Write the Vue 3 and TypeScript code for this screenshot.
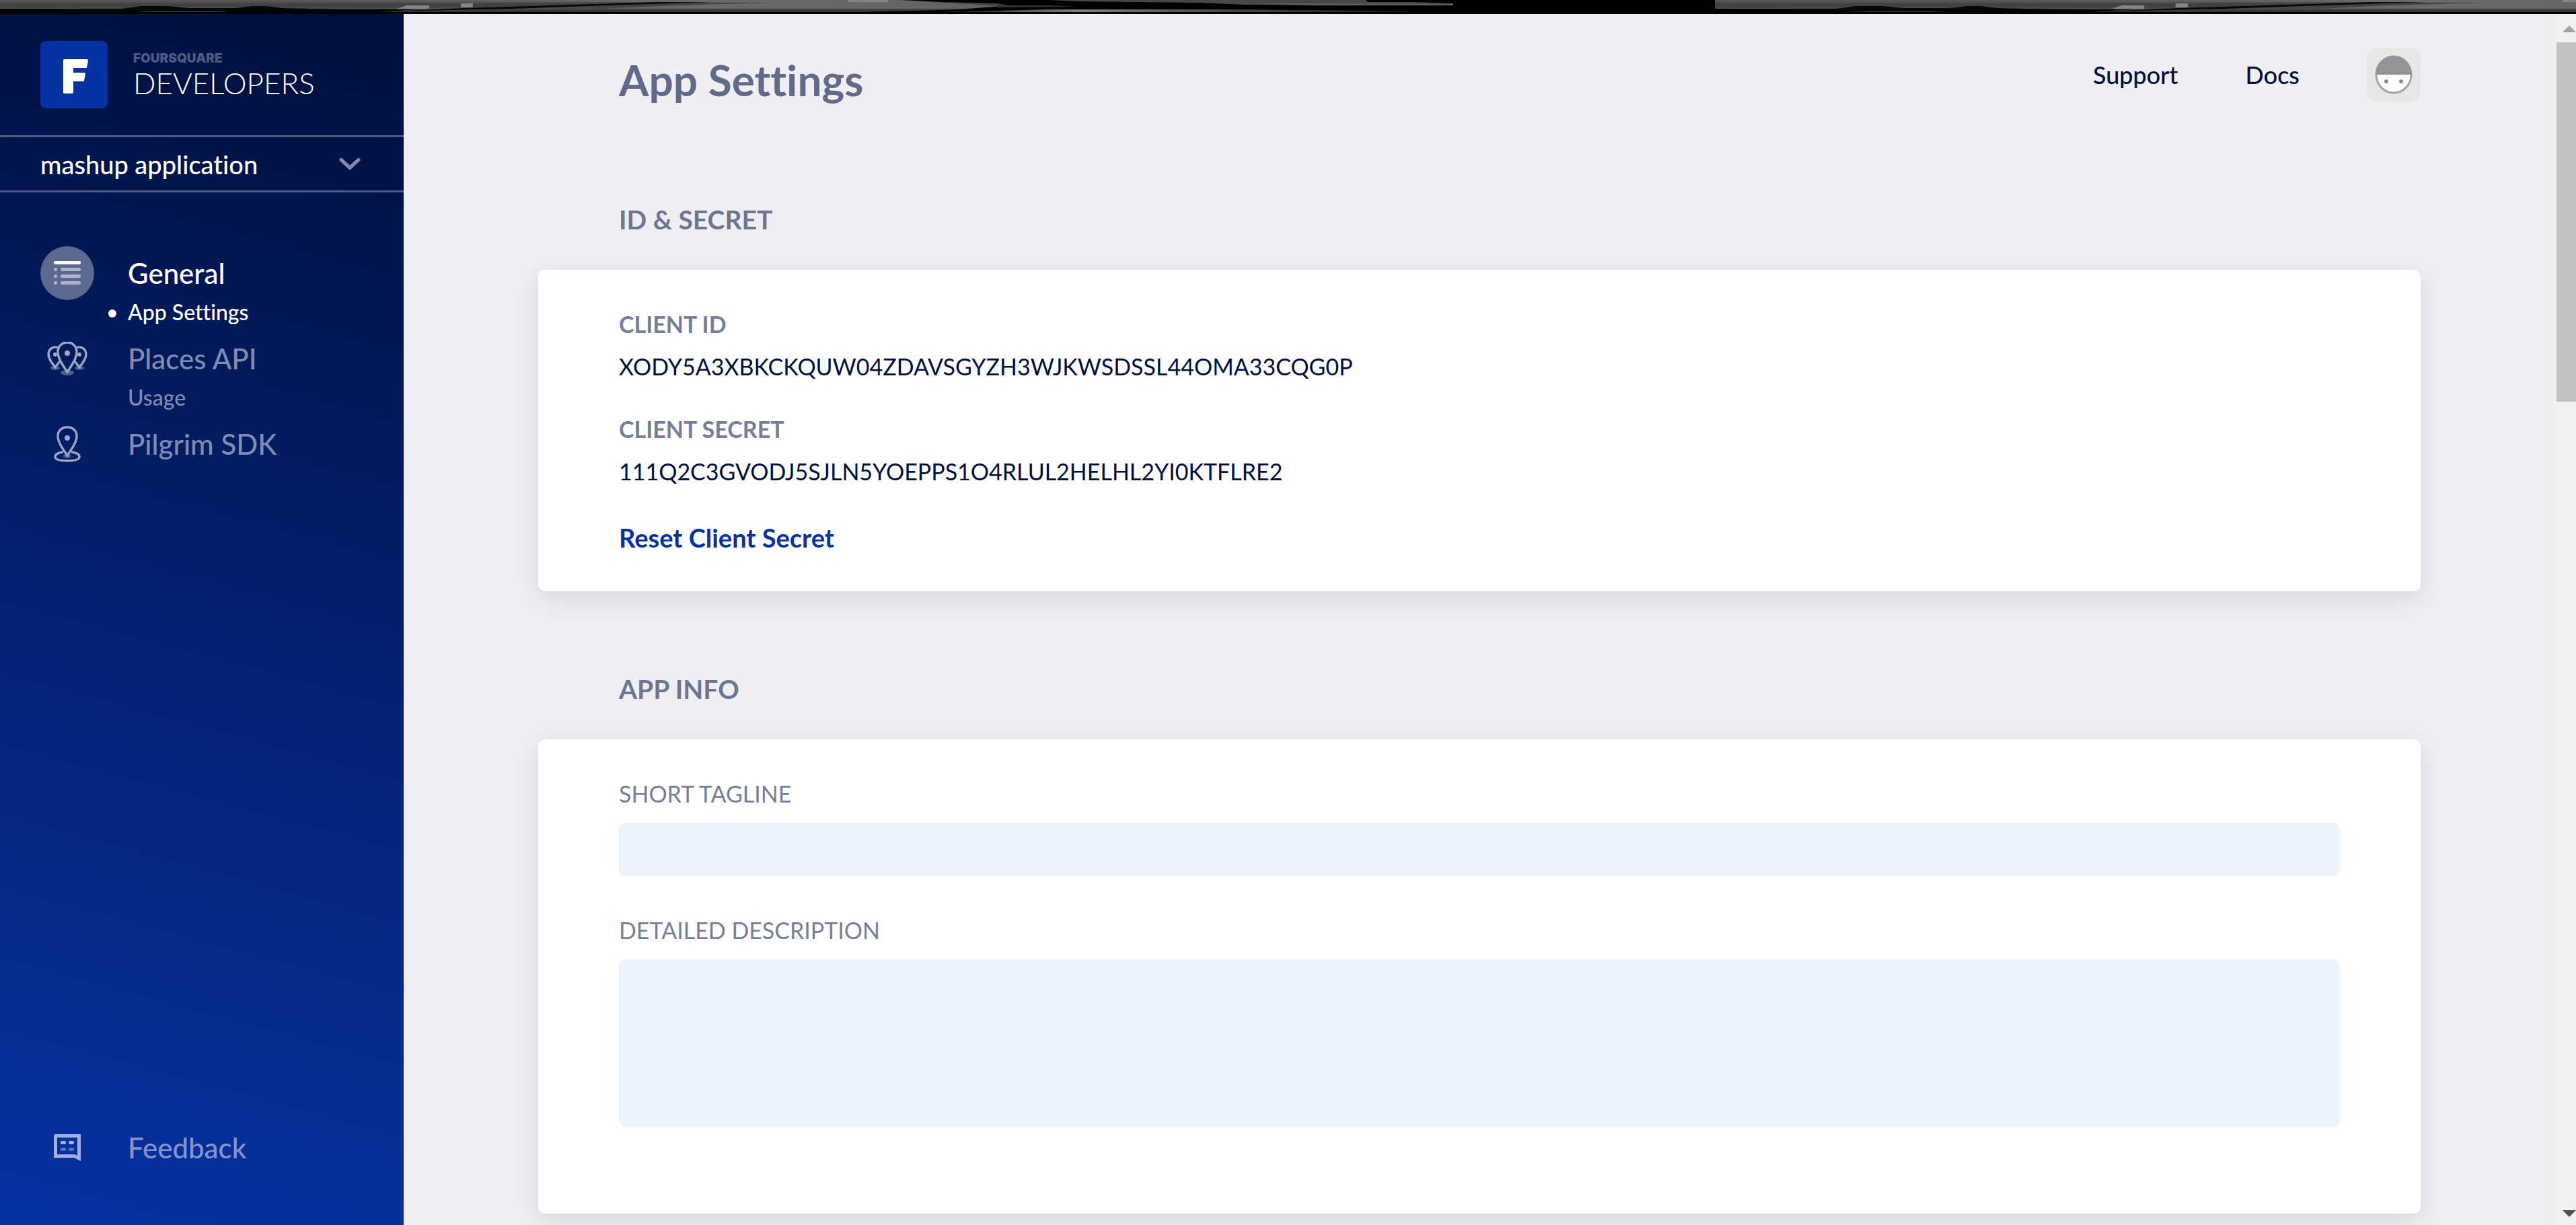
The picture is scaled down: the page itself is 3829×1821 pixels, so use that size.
<script setup lang="ts">
interface Child { label: string; active?: boolean }
interface Group { label: string; icon: 'list' | 'pins' | 'pin'; active?: boolean; children: Child[] }

const groups: Group[] = [
  { label: 'General', icon: 'list', active: true, children: [{ label: 'App Settings', active: true }] },
  { label: 'Places API', icon: 'pins', children: [{ label: 'Usage' }] },
  { label: 'Pilgrim SDK', icon: 'pin', children: [] },
]

const credentials = [
  { label: 'CLIENT ID', value: 'XODY5A3XBKCKQUW04ZDAVSGYZH3WJKWSDSSL44OMA33CQG0P' },
  { label: 'CLIENT SECRET', value: '111Q2C3GVODJ5SJLN5YOEPPS1O4RLUL2HELHL2YI0KTFLRE2' },
]
</script>

<template>
  <div class="window">
    <div class="strip">
      <svg width="100%" height="21" aria-hidden="true">
        <defs>
          <linearGradient id="metal" x1="0" y1="0" x2="0" y2="1">
            <stop offset="0" stop-color="#5a5a5a" />
            <stop offset="0.4" stop-color="#3e3e3e" />
            <stop offset="0.7" stop-color="#4a4a4a" />
            <stop offset="1" stop-color="#2c2c2c" />
          </linearGradient>
          <linearGradient id="shine" x1="0" y1="0" x2="1" y2="0">
            <stop offset="0" stop-color="#6a6a6a" stop-opacity="0" />
            <stop offset="0.6" stop-color="#6a6a6a" />
            <stop offset="1" stop-color="#626262" />
          </linearGradient>
          <linearGradient id="fade" x1="0" y1="0" x2="1" y2="0">
            <stop offset="0" stop-color="#222" />
            <stop offset="0.3" stop-color="#808080" />
            <stop offset="0.6" stop-color="#4a4a4a" />
            <stop offset="1" stop-color="#111" />
          </linearGradient>
          <pattern id="texture" width="2549" height="21" patternUnits="userSpaceOnUse">
            <rect width="2549" height="21" fill="#000" />
            <path d="M0 0H1340L1400 3L1480 5L1500 8L1440 13L1400 15L1280 18H560L620 14L0 13Z" fill="url(#metal)" />
            <path d="M400 0H1330L1400 4L1490 9L1430 13L900 13L1000 8L1150 4L900 3L400 4Z" fill="url(#shine)" />
            <path d="M180 13L210 9H250L280 12L350 12L375 9H395L420 12L500 14L180 15Z" fill="#080808" />
            <path d="M200 18L230 16H320L340 18Z" fill="#2e2e2e" />
            <path d="M560 18L690 12L820 8L980 3L1060 3L900 8L760 13L620 16Z" fill="#060606" />
            <path d="M590 13L605 8H638V13Z" fill="#858585" />
            <rect x="685" y="5" width="18" height="6" fill="#858585" />
            <rect x="1260" width="60" height="3" fill="#858585" />
            <path d="M1480 8L1560 8L1600 10L1480 11Z" fill="#333" />
            <path d="M1560 0H2030L2034 3H2100L2160 5V8H1960L1850 7L1780 4L1600 2Z" fill="#474747" />
            <path d="M1860 5L2160 6V8L1960 8Z" fill="#606060" />
            <path d="M1400 18L1560 14H1820L2094 16V18Z" fill="url(#fade)" />
          </pattern>
        </defs>
        <rect width="100%" height="21" fill="url(#texture)" />
      </svg>
    </div>

    <div class="shell">
      <aside class="sidebar">
        <a class="brand" href="#">
          <svg class="brand-mark" viewBox="0 0 100 100" aria-hidden="true">
            <rect width="100" height="100" rx="8" fill="#0732a2" />
            <path d="M36 27H69Q71 27 71 29L69 39Q69 40 67 40H49V47H65Q67 47 67 49L65 59Q65 60 63 60H49V76Q49 78 47 78H36Q34 78 34 76V29Q34 27 36 27Z" fill="#fff" />
          </svg>
          <span class="brand-text">
            <span class="brand-top">FOURSQUARE</span>
            <span class="brand-name">DEVELOPERS</span>
          </span>
        </a>

        <button class="switcher" type="button">
          <span>mashup application</span>
          <svg class="chevron" viewBox="0 0 30 18" aria-hidden="true">
            <path d="M3 3L15 14L27 3" fill="none" stroke="currentColor" stroke-width="5" stroke-linecap="round" />
          </svg>
        </button>

        <nav class="nav">
          <template v-for="group in groups" :key="group.label">
            <a class="item" :class="{ active: group.active }" href="#">
              <span class="icon" :class="{ disc: group.active }">
                <svg v-if="group.icon === 'list'" width="40" height="36" viewBox="0 0 40 36" aria-hidden="true">
                  <rect width="40" height="5" rx="2" y="0" fill="#fff" />
                  <g fill="#fff" opacity="0.5">
                    <rect y="10" width="5" height="5" rx="2" /><rect x="10" y="10" width="30" height="5" rx="2" />
                    <rect y="20" width="5" height="5" rx="2" /><rect x="10" y="20" width="30" height="5" rx="2" />
                    <rect y="30" width="5" height="5" rx="2" /><rect x="10" y="30" width="30" height="5" rx="2" />
                  </g>
                </svg>
                <svg v-else-if="group.icon === 'pins'" width="60" height="50" viewBox="0 0 60 50" aria-hidden="true">
                  <g fill="#fff" opacity="0.3">
                    <ellipse cx="12" cy="39" rx="7" ry="3" /><ellipse cx="48" cy="39" rx="7" ry="3" />
                    <ellipse cx="30" cy="46" rx="10" ry="4" />
                  </g>
                  <g fill="none" stroke="#9ba5c5" stroke-width="3.4">
                    <path d="M17 9C10 6 2 10 2 19C2 25 8 33 12 38L19 29" />
                    <path d="M43 9C50 6 58 10 58 19C58 25 52 33 48 38L41 29" />
                    <path d="M30 45C24 36 16 25 16 15C16 7 22 1 30 1S44 7 44 15C44 25 36 36 30 45Z" />
                  </g>
                  <g fill="#9ba5c5">
                    <circle cx="30" cy="17" r="4" /><circle cx="12" cy="19" r="3" /><circle cx="48" cy="19" r="3" />
                  </g>
                </svg>
                <svg v-else width="40" height="54" viewBox="0 0 40 54" aria-hidden="true">
                  <ellipse cx="20" cy="45" rx="6" ry="3" fill="#fff" opacity="0.3" />
                  <g fill="none" stroke="#9ba5c5" stroke-width="3.4">
                    <path d="M14 39C6 40 2 42 2 46C2 50 9 52 20 52S38 50 38 46C38 42 34 40 26 39" />
                    <path d="M20 44C14 35 6 25 6 15C6 7 12 2 20 2S34 7 34 15C34 25 26 35 20 44Z" />
                  </g>
                  <circle cx="20" cy="18" r="4" fill="#9ba5c5" />
                </svg>
              </span>
              <span>{{ group.label }}</span>
            </a>
            <a v-for="child in group.children" :key="child.label" class="child" :class="{ active: child.active }" href="#">
              <span class="marker"><i v-if="child.active" class="dot"></i></span>
              <span>{{ child.label }}</span>
            </a>
          </template>
        </nav>

        <a class="item feedback" href="#">
          <span class="icon">
            <svg width="40" height="40" viewBox="0 0 40 40" aria-hidden="true">
              <path d="M3 0H40V40L30 35H0V3Q0 0 3 0ZM5 5V30H31L35 32V5Z" fill="#a3afda" fill-rule="evenodd" />
              <g fill="#a3afda">
                <rect x="10" y="10" width="8" height="5" rx="2" /><rect x="22" y="10" width="8" height="5" rx="2" />
              </g>
              <g fill="#a3afda" opacity="0.5">
                <rect x="10" y="20" width="8" height="5" rx="2" /><rect x="22" y="20" width="8" height="5" rx="2" />
              </g>
            </svg>
          </span>
          <span>Feedback</span>
        </a>
      </aside>

      <main class="content">
        <header class="topbar">
          <h1>App Settings</h1>
          <div class="links">
            <a href="#">Support</a>
            <a href="#">Docs</a>
            <button class="avatar" type="button" aria-label="Account">
              <svg width="56" height="58" viewBox="0 0 56 58" aria-hidden="true">
                <ellipse cx="28" cy="29" rx="26" ry="27" fill="#fff" stroke="#a3a5aa" stroke-width="3" />
                <path d="M1 29A27 28 0 0 1 55 29Z" fill="#929498" />
                <circle cx="17" cy="39" r="3" fill="#8c8e93" /><circle cx="39" cy="39" r="3" fill="#8c8e93" />
              </svg>
            </button>
          </div>
        </header>

        <h2>ID &amp; SECRET</h2>
        <section class="card">
          <dl>
            <template v-for="row in credentials" :key="row.label">
              <dt>{{ row.label }}</dt>
              <dd>{{ row.value }}</dd>
            </template>
          </dl>
          <button class="reset" type="button">Reset Client Secret</button>
        </section>

        <h2>APP INFO</h2>
        <section class="card form">
          <label for="tagline">SHORT TAGLINE</label>
          <input id="tagline" type="text" />
          <label for="description">DETAILED DESCRIPTION</label>
          <textarea id="description"></textarea>
        </section>
      </main>

      <div class="scrollbar" aria-hidden="true">
        <svg width="20" height="10" viewBox="0 0 20 10"><path d="M0 10L10 0L20 10Z" fill="#a3a3a3" /></svg>
        <div class="track"><div class="thumb"></div></div>
        <svg width="20" height="10" viewBox="0 0 20 10"><path d="M0 0H20L10 10Z" fill="#505050" /></svg>
      </div>
    </div>
  </div>
</template>

<style>
body {
  background: #efeef3;
}
</style>

<style scoped>
.window {
  display: flex;
  flex-direction: column;
  height: 100vh;
  overflow: hidden;
  font-family: Lato, "Open Sans", sans-serif;
  font-size: 34px;
  line-height: 40px;
  font-variant-ligatures: none;
  color: #000f3d;
}
a {
  color: inherit;
  text-decoration: none;
}
button {
  padding: 0;
  border: 0;
  background: none;
  font: inherit;
  font-variant-ligatures: none;
  color: inherit;
  cursor: pointer;
}
.strip {
  flex: none;
  height: 21px;
  background: #000;
}
.strip svg {
  display: block;
}
.shell {
  display: flex;
  flex: 1;
  min-height: 0;
}
.sidebar {
  display: flex;
  flex-direction: column;
  flex: none;
  width: 600px;
  background: linear-gradient(195deg, #000f3b 0%, #011650 20%, #0631a1 98%);
  color: #7f8bb0;
}
.brand {
  display: flex;
  align-items: center;
  gap: 38px;
  height: 180px;
  box-sizing: border-box;
  padding: 0 60px;
}
.brand-mark {
  width: 100px;
  height: 100px;
}
.brand-text {
  display: flex;
  flex-direction: column;
}
.brand-top {
  font-family: Inter, Lato, sans-serif;
  font-size: 19px;
  font-weight: 900;
  line-height: 24px;
  color: #4c5980;
}
.brand-name {
  font-size: 44px;
  font-weight: 300;
  line-height: 48px;
  color: #fff;
}
.switcher {
  display: flex;
  align-items: center;
  justify-content: space-between;
  height: 85px;
  box-sizing: border-box;
  padding: 0 64px 0 60px;
  border: solid #4d5982;
  border-width: 3px 0;
  font-size: 38px;
  font-weight: 500;
  color: #fff;
}
.chevron {
  width: 32px;
  height: 20px;
  color: #7f8aaa;
}
.nav {
  flex: 1;
  padding-top: 80px;
}
.item {
  display: flex;
  align-items: center;
  gap: 50px;
  height: 80px;
  padding-left: 60px;
  font-size: 42px;
  font-weight: 500;
}
.item.active,
.child.active {
  color: #fff;
}
.icon {
  display: flex;
  align-items: center;
  justify-content: center;
  width: 80px;
  height: 80px;
}
.disc {
  border-radius: 50%;
  background: #5b688f;
}
.child {
  display: flex;
  align-items: flex-start;
  height: 47px;
  font-size: 32px;
  font-weight: 500;
  line-height: 36px;
}
.marker {
  display: flex;
  align-items: center;
  width: 190px;
  height: 40px;
}
.dot {
  width: 12px;
  height: 12px;
  margin-left: 161px;
  border-radius: 50%;
  background: #fff;
}
.feedback {
  margin-bottom: 75px;
  color: #8494ca;
}
.content {
  flex: 1;
  min-width: 0;
  padding: 0 200px;
}
.topbar {
  display: flex;
  align-items: center;
  justify-content: space-between;
  height: 160px;
  box-sizing: border-box;
  padding: 20px 0 0 120px;
}
h1 {
  margin: 16px 0 0;
  font-size: 64px;
  line-height: 80px;
  font-weight: 700;
  color: #616b89;
}
.links {
  display: flex;
  align-items: center;
  gap: 100px;
  font-size: 36px;
  font-weight: 500;
}
.avatar {
  display: flex;
  align-items: center;
  justify-content: center;
  width: 80px;
  height: 80px;
  border-radius: 16px;
  background: #e7e7e5;
}
h2 {
  margin: 120px 0 50px;
  padding-left: 120px;
  font-size: 39px;
  line-height: 50px;
  font-weight: 700;
  color: #6c7692;
}
.card {
  padding: 61px 120px 60px;
  border-radius: 10px;
  background: #fff;
  box-shadow: 0 10px 40px rgba(0, 0, 30, 0.1);
}
.form {
  padding-bottom: 68px;
}
dl {
  margin: 0 0 58px;
}
dt {
  font-weight: 700;
  color: #757f99;
}
dd {
  margin: 23px 0 53px;
}
.reset {
  display: block;
  font-size: 38px;
  font-weight: 700;
  color: #0732a2;
}
label {
  display: block;
  margin-bottom: 23px;
  color: #757f99;
}
input,
textarea {
  display: block;
  box-sizing: border-box;
  width: 100%;
  height: 80px;
  margin: 0 0 60px;
  padding: 0 20px;
  border: 0;
  border-radius: 10px;
  background: #eff3fb;
  font: inherit;
  color: inherit;
  resize: none;
}
textarea {
  height: 250px;
}
.scrollbar {
  display: flex;
  flex-direction: column;
  align-items: flex-end;
  flex: none;
  width: 31px;
  box-sizing: border-box;
  padding: 17px 0 12px;
  background: #f1f1f1;
}
.track {
  flex: 1;
  align-self: stretch;
  margin: 15px 0;
}
.thumb {
  height: 31%;
  margin-left: 2px;
  background: #c1c1c1;
}
</style>
